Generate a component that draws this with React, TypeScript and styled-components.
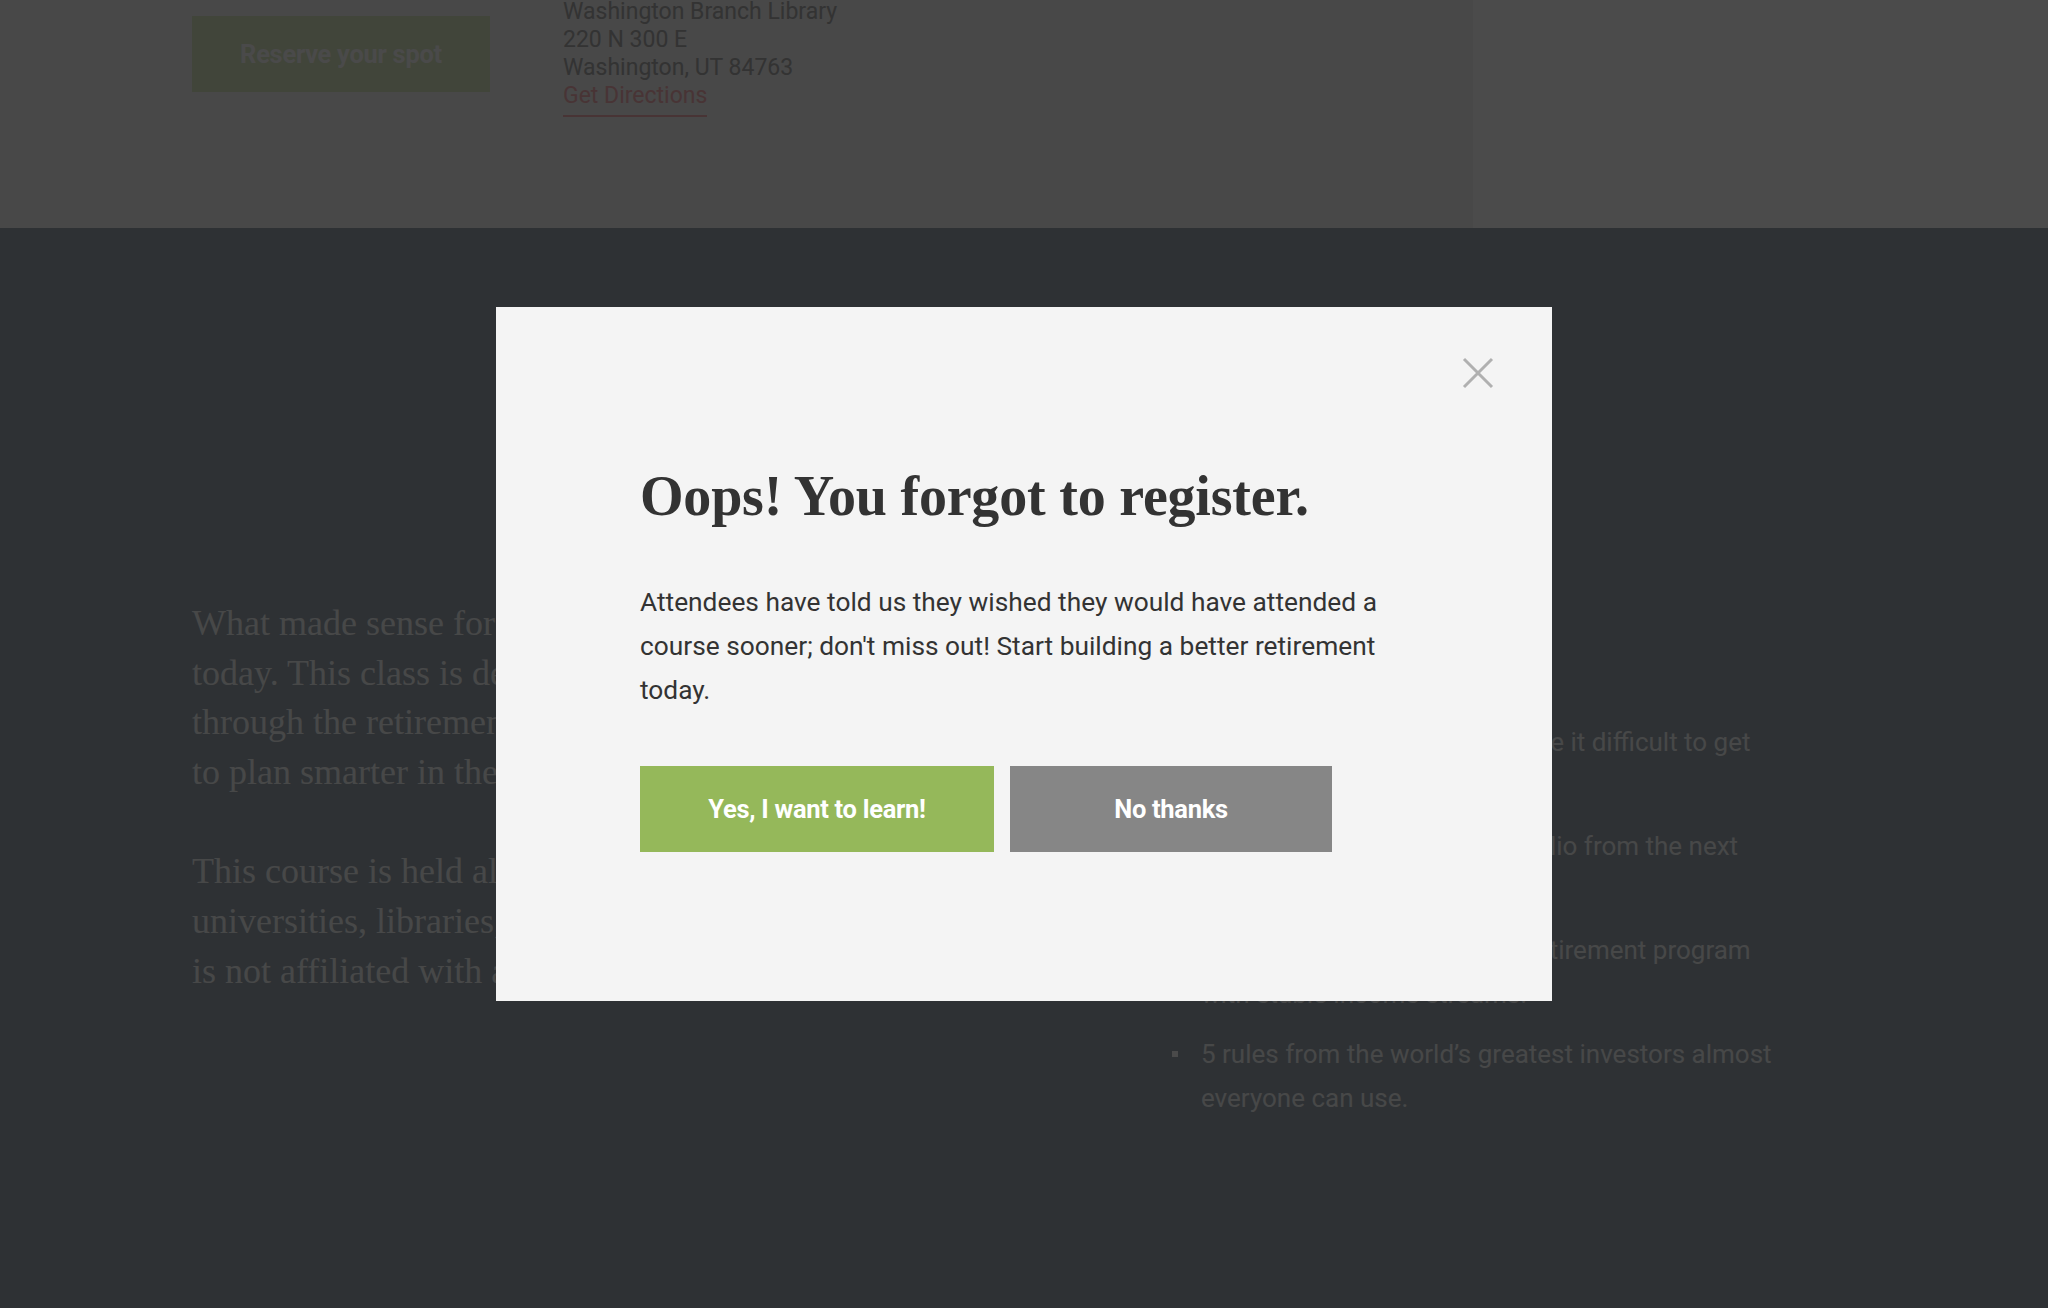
import React from 'react';
import styled, { createGlobalStyle } from 'styled-components';

const GlobalStyle = createGlobalStyle`
  html, body {
    margin: 0;
    padding: 0;
  }
  body {
    font-family: Roboto, "Liberation Sans", Arial, sans-serif;
    background: #99a3ad;
    overflow: hidden;
  }
  * {
    box-sizing: border-box;
  }
`;

const Page = styled.div`
  min-height: 1308px;
  display: flex;
  flex-direction: column;
`;

const TopBand = styled.section`
  display: flex;
  height: 228px;
  background: #f0f0f0;
  overflow: hidden;
`;

const TopMain = styled.div`
  flex: 1;
  display: flex;
  align-items: flex-start;
  gap: 73px;
  padding-left: 192px;
`;

const TopAside = styled.aside`
  width: 575px;
  background: #fafafa;
`;

const ReserveButton = styled.button`
  margin-top: 16px;
  width: 298px;
  height: 76px;
  border: 0;
  background: #d9e6c1;
  color: #f7f7f7;
  font-family: Roboto, "Liberation Sans", Arial, sans-serif;
  font-weight: 700;
  font-size: 25.5px;
  letter-spacing: -0.3px;
`;

const Address = styled.address`
  margin-top: -2px;
  display: flex;
  flex-direction: column;
  align-items: flex-start;
  font-style: normal;
  font-size: 23px;
  line-height: 28px;
  color: #aaaaaa;
`;

const DirectionsLink = styled.a`
  display: inline-block;
  color: #f0aeb3;
  text-decoration: none;
  padding-bottom: 5px;
  border-bottom: 2px solid #f0aeb3;
`;

const DarkSection = styled.section`
  flex: 1;
  background: #99a3ad;
  padding: 150px 192px 120px;
`;

const SectionTitle = styled.h2`
  margin: 0 0 171px;
  text-align: center;
  font-family: "Liberation Serif", "Times New Roman", serif;
  font-weight: 700;
  font-size: 44px;
  line-height: 50px;
  color: #eef0f2;
`;

const Columns = styled.div`
  display: grid;
  grid-template-columns: 860px 1fr;
  column-gap: 120px;
  align-items: start;
`;

const Prose = styled.div`
  display: flex;
  flex-direction: column;
  gap: 50px;
`;

const ProseParagraph = styled.p`
  margin: 0;
  white-space: pre;
  font-family: "Liberation Serif", "Times New Roman", serif;
  font-size: 36px;
  line-height: 49.6px;
  color: #eef0f2;
`;

const LearnList = styled.ul`
  list-style: none;
  margin: 121px 0 0;
  padding: 0;
  display: flex;
  flex-direction: column;
  gap: 16px;
`;

const LearnItem = styled.li`
  display: flex;
  align-items: flex-start;
  gap: 23px;
  font-size: 26px;
  line-height: 44px;
  color: #eef0f2;
  white-space: pre;
`;

const Bullet = styled.span`
  flex: none;
  width: 6px;
  height: 6px;
  margin-top: 19px;
  background: #f7f7f7;
`;

const Overlay = styled.div`
  position: fixed;
  inset: 0;
  background: rgba(0, 0, 0, 0.7);
  display: flex;
  align-items: center;
  justify-content: center;
`;

const Modal = styled.div`
  position: relative;
  width: 1056px;
  background: #f4f4f4;
  padding: 156px 144px 149px;
`;

const CloseButton = styled.button`
  position: absolute;
  top: 50px;
  right: 58px;
  width: 32px;
  height: 32px;
  padding: 0;
  border: 0;
  background: transparent;
  display: flex;
  align-items: center;
  justify-content: center;
`;

const ModalTitle = styled.h1`
  margin: 0;
  font-family: "Liberation Serif", "Times New Roman", serif;
  font-weight: 700;
  font-size: 56px;
  line-height: 66px;
  letter-spacing: -0.2px;
  color: #333333;
`;

const ModalText = styled.p`
  margin: 51px 0 0;
  max-width: 770px;
  font-size: 26.3px;
  line-height: 44px;
  color: #333333;
`;

const Actions = styled.div`
  display: flex;
  gap: 16px;
  margin-top: 54px;
`;

const ActionButton = styled.button<{ $tone: 'primary' | 'muted'; $width: number }>`
  width: ${(p) => p.$width}px;
  height: 86px;
  border: 0;
  background: ${(p) => (p.$tone === 'primary' ? '#95b85a' : '#868686')};
  color: #ffffff;
  font-family: Roboto, "Liberation Sans", Arial, sans-serif;
  font-weight: 700;
  font-size: 25.5px;
  letter-spacing: -0.3px;
`;

const CloseIcon = () => (
  <svg width="32" height="32" viewBox="0 0 32 32" aria-hidden="true">
    <path d="M2 2 L30 30 M30 2 L2 30" stroke="#b0b0b0" strokeWidth="3" strokeLinecap="butt" />
  </svg>
);

const learnItems = [
  'Common mistakes which make it difficult to get\nahead in retirement.',
  'Ways to safeguard your portfolio from the next\nmarket downturn.',
  'How to build a personalized retirement program\nwith stable income streams.',
  '5 rules from the world\u2019s greatest investors almost\neveryone can use.',
];

export default function App() {
  return (
    <>
      <GlobalStyle />
      <Page>
        <TopBand>
          <TopMain>
            <ReserveButton>Reserve your spot</ReserveButton>
            <Address>
              <span>Washington Branch Library</span>
              <span>220 N 300 E</span>
              <span>Washington, UT 84763</span>
              <DirectionsLink href="#">Get Directions</DirectionsLink>
            </Address>
          </TopMain>
          <TopAside />
        </TopBand>
        <DarkSection>
          <SectionTitle>About This Class</SectionTitle>
          <Columns>
            <Prose>
              <ProseParagraph>
                {'What made sense for retirement years ago\ntoday. This class is designed to help you\nthrough the retirement maze and teach you\nto plan smarter in the years ahead.'}
              </ProseParagraph>
              <ProseParagraph>
                {'This course is held all over the country at\nuniversities, libraries, and community\nis not affiliated with any of these.'}
              </ProseParagraph>
            </Prose>
            <LearnList>
              {learnItems.map((item) => (
                <LearnItem key={item}>
                  <Bullet />
                  <span>{item}</span>
                </LearnItem>
              ))}
            </LearnList>
          </Columns>
        </DarkSection>
      </Page>
      <Overlay>
        <Modal role="dialog" aria-modal="true">
          <CloseButton aria-label="Close">
            <CloseIcon />
          </CloseButton>
          <ModalTitle>Oops! You forgot to register.</ModalTitle>
          <ModalText>
            Attendees have told us they wished they would have attended a course sooner; don't miss
            out! Start building a better retirement today.
          </ModalText>
          <Actions>
            <ActionButton $tone="primary" $width={354}>Yes, I want to learn!</ActionButton>
            <ActionButton $tone="muted" $width={322}>No thanks</ActionButton>
          </Actions>
        </Modal>
      </Overlay>
    </>
  );
}
